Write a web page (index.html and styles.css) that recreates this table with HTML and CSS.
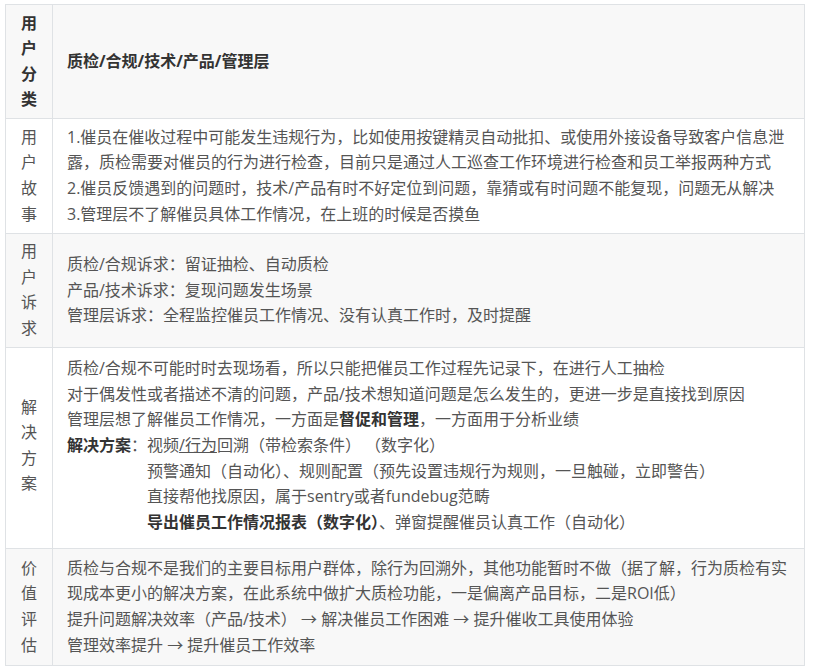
FILE: index.html
```html
<!DOCTYPE html>
<html lang="zh-CN">
  <head>
    <meta charset="utf-8" />
    <title>用户分析</title>
    <link rel="stylesheet" href="styles.css">
  </head>
  <body>
    <table class="story-table">
      <colgroup>
        <col class="col-label" />
        <col />
      </colgroup>
      <thead>
        <tr>
          <th class="label">用户分类</th>
          <th>质检/合规/技术/产品/管理层</th>
        </tr>
      </thead>
      <tbody>
        <tr>
          <td class="label">用户故事</td>
          <td>
            1.催员在催收过程中可能发生违规行为，比如使用按键精灵自动批扣、或使用外接设备导致客户信息泄露，质检需要对催员的行为进行检查，目前只是通过人工巡查工作环境进行检查和员工举报两种方式<br />
            2.催员反馈遇到的问题时，技术/产品有时不好定位到问题，靠猜或有时问题不能复现，问题无从解决<br />
            3.管理层不了解催员具体工作情况，在上班的时候是否摸鱼
          </td>
        </tr>
        <tr>
          <td class="label">用户诉求</td>
          <td>
            质检/合规诉求：留证抽检、自动质检<br />
            产品/技术诉求：复现问题发生场景<br />
            管理层诉求：全程监控催员工作情况、没有认真工作时，及时提醒
          </td>
        </tr>
        <tr class="tall">
          <td class="label">解决方案</td>
          <td>
            质检/合规不可能时时去现场看，所以只能把催员工作过程先记录下，在进行人工抽检<br />
            对于偶发性或者描述不清的问题，产品/技术想知道问题是怎么发生的，更进一步是直接找到原因<br />
            管理层想了解催员工作情况，一方面是<strong>督促和管理</strong>，一方面用于分析业绩<br />
            <strong>解决方案</strong>：视频<u>/行为</u>回溯（带检索条件） （数字化）
            <div class="sub">预警通知（自动化）、规则配置（预先设置违规行为规则，一旦触碰，立即警告）</div>
            <div class="sub">直接帮他找原因，属于sentry或者fundebug范畴</div>
            <div class="sub"><strong>导出催员工作情况报表（数字化）</strong>、弹窗提醒催员认真工作（自动化）</div>
          </td>
        </tr>
        <tr class="last">
          <td class="label">价值评估</td>
          <td>
            质检与合规不是我们的主要目标用户群体，除行为回溯外，其他功能暂时不做（据了解，行为质检有实现成本更小的解决方案，在此系统中做扩大质检功能，一是偏离产品目标，二是ROI低）<br />
            提升问题解决效率（产品/技术） → 解决催员工作困难 → 提升催收工具使用体验<br />
            管理效率提升 → 提升催员工作效率
          </td>
        </tr>
      </tbody>
    </table>
  </body>
</html>
```

FILE: styles.css
```css
body {
  margin: 0;
  padding: 4px 0 0 5px;
  background-color: #fff;
  font-family: "Open Sans", "Noto Sans CJK SC", sans-serif;
  font-size: 16px;
  line-height: 1.6;
  color: #555;
}

.story-table {
  width: 800px;
  border-collapse: collapse;
  table-layout: fixed;
}

.col-label {
  width: 47px;
}

.story-table th,
.story-table td {
  border: 1px solid #dfe2e5;
  padding: 5.5px 14px;
  text-align: left;
  vertical-align: middle;
}

.story-table th {
  color: #333;
  font-weight: bold;
  background-color: #f8f8f8;
}

.story-table td.label,
.story-table th.label {
  text-align: center;
  padding: 5.5px 15px;
}

.story-table tbody tr:nth-child(even) {
  background-color: #f8f8f8;
}

.story-table tr.tall td,
.story-table tr.tall td.label {
  padding-top: 8px;
  padding-bottom: 13px;
}

.story-table tr.last td,
.story-table tr.last td.label {
  padding-top: 6.5px;
  padding-bottom: 6.5px;
}

strong {
  color: #333;
}

.sub {
  padding-left: 80px;
}
```
